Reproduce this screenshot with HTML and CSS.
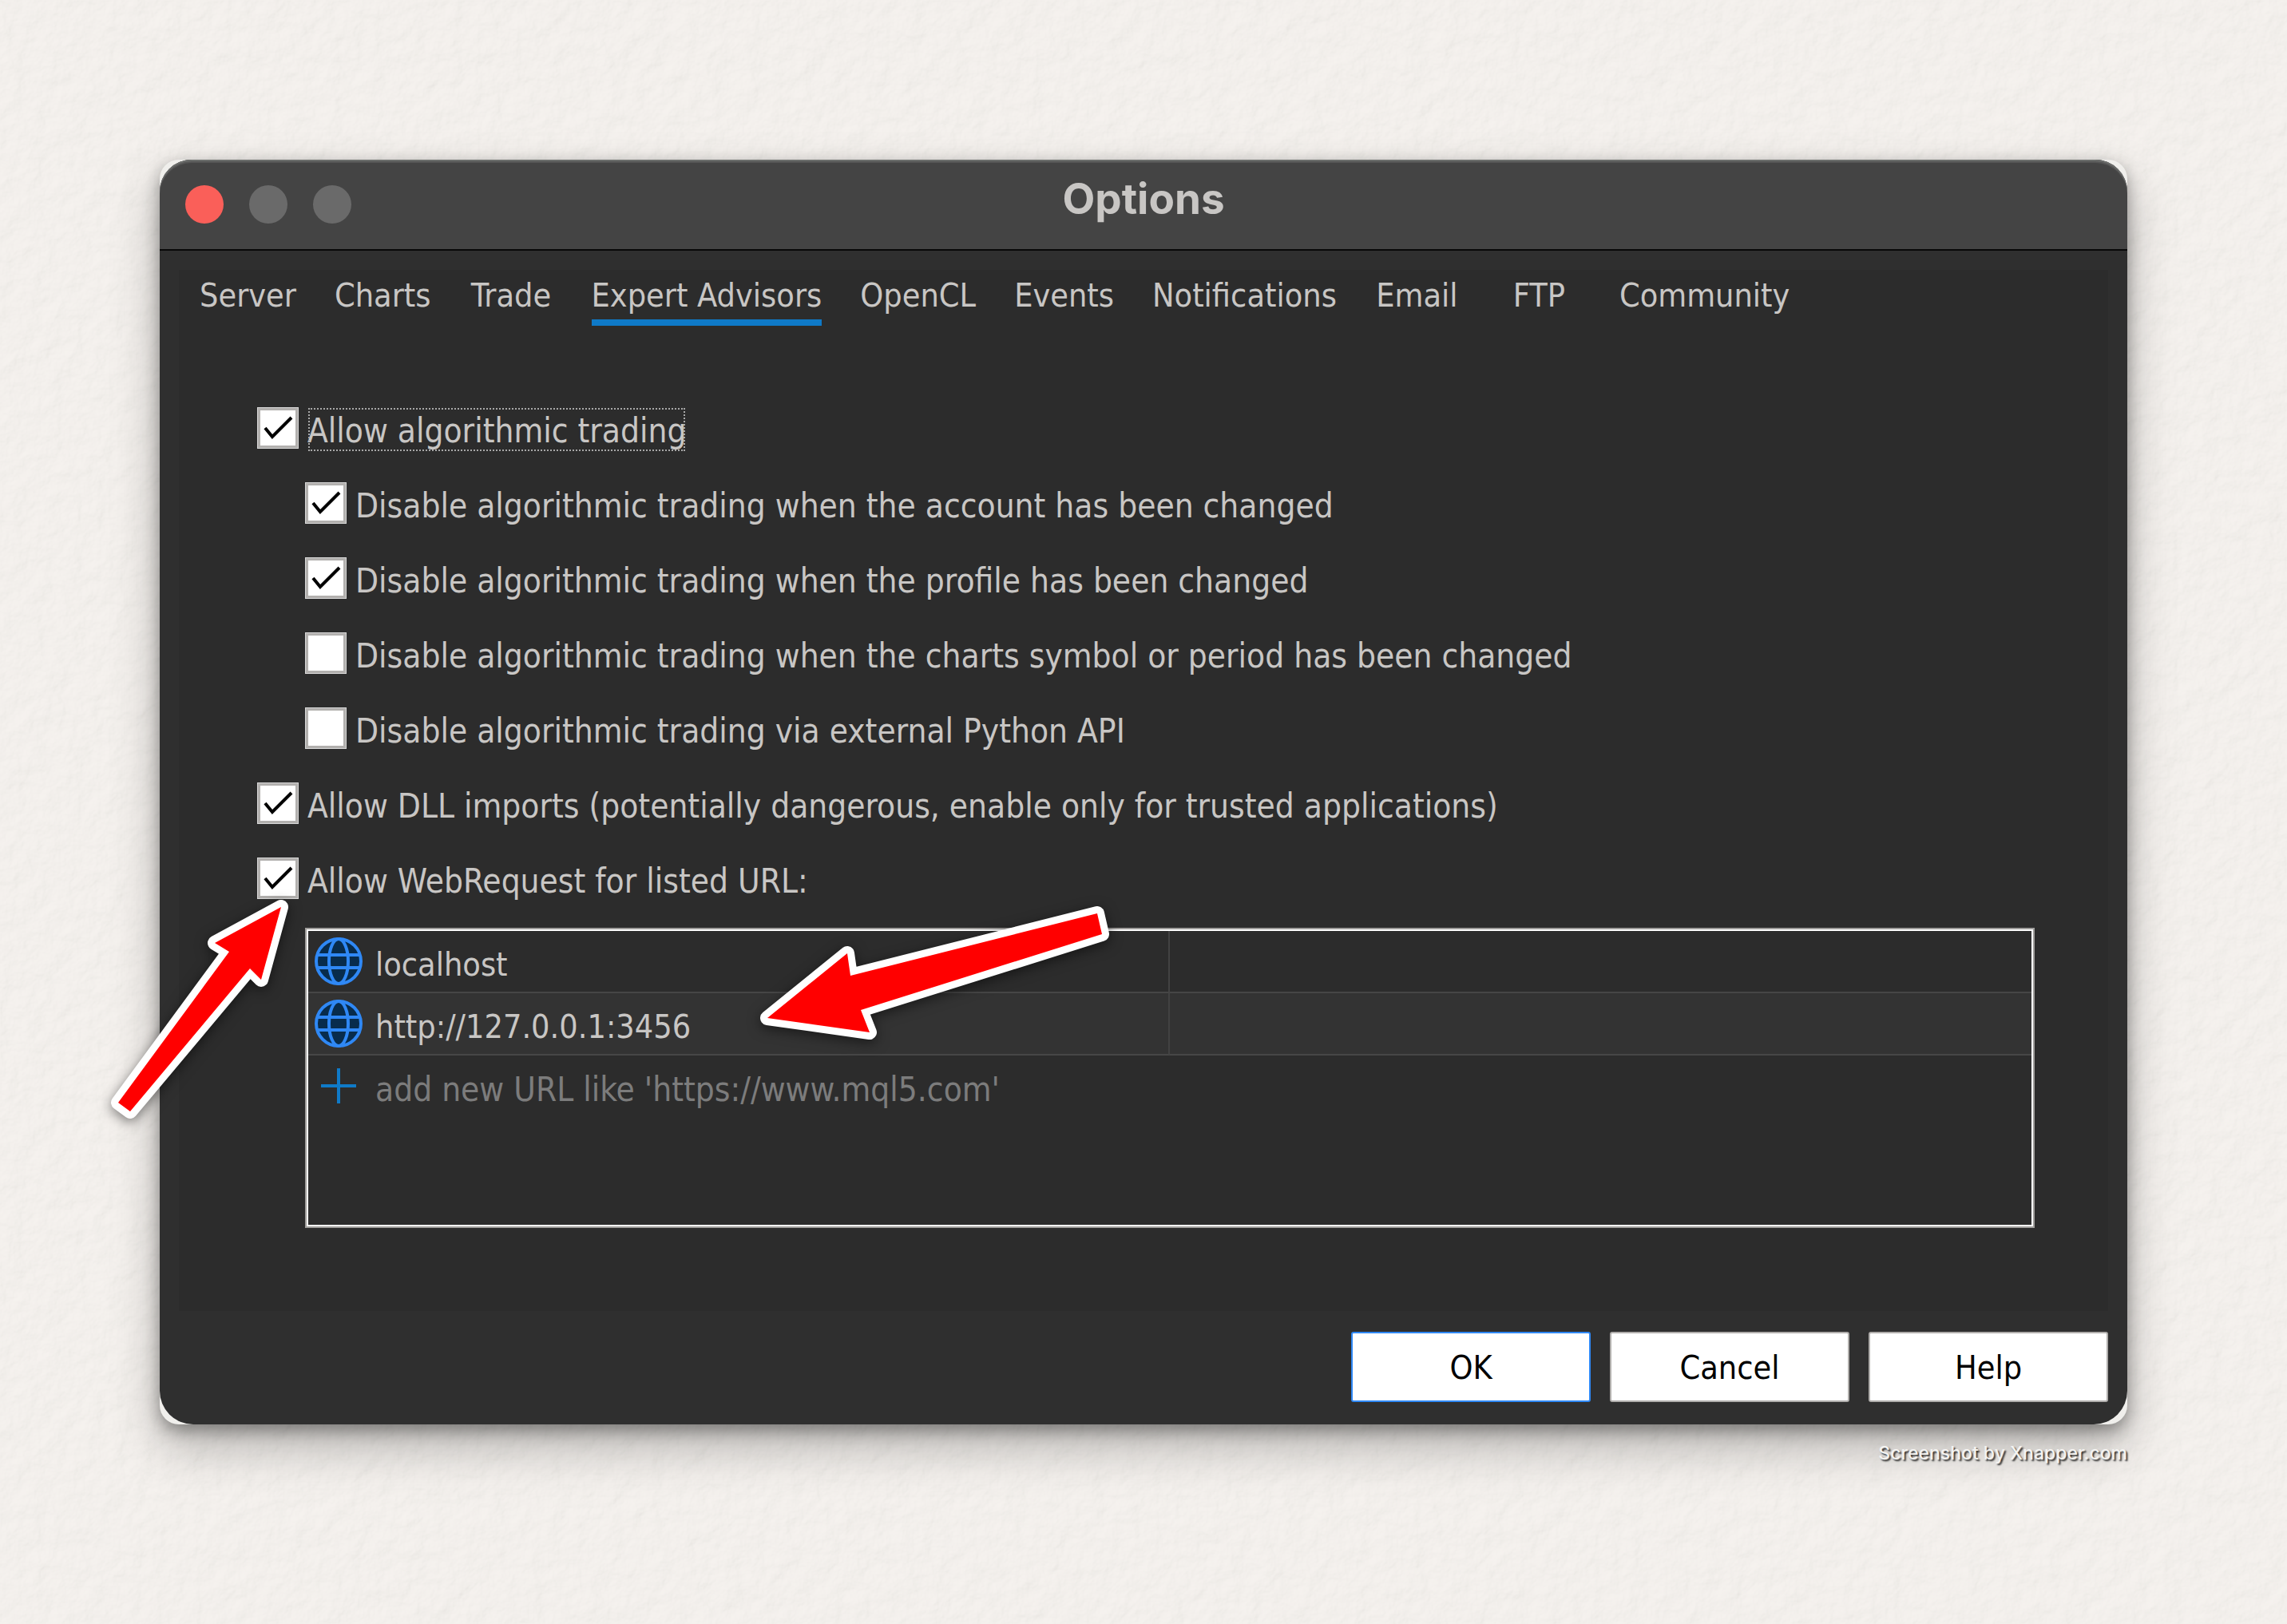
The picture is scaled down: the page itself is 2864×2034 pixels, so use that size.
FILE: index.html
```
<!DOCTYPE html>
<html lang="en">
<head>
  <meta charset="UTF-8">
  <title>Options</title>
  <link rel="stylesheet" href="styles.css">
</head>
<body>

  <!-- paper texture -->
  <svg class="paper" aria-hidden="true">
    <filter id="grain" x="0" y="0" width="100%" height="100%">
      <feTurbulence type="fractalNoise" baseFrequency="0.04" numOctaves="4" seed="7"/>
      <feDiffuseLighting lighting-color="#f5f2ee" surfaceScale="1.4" diffuseConstant="1">
        <feDistantLight azimuth="225" elevation="78"/>
      </feDiffuseLighting>
    </filter>
    <rect width="100%" height="100%" filter="url(#grain)"/>
  </svg>

  <div class="window-frame">
    <div class="window">

      <header class="title-bar">
        <div class="lights">
          <span class="light close"></span>
          <span class="light"></span>
          <span class="light"></span>
        </div>
        <h1>Options</h1>
      </header>

      <main class="panel">
        <nav class="tabs">
          <a href="#"><span>Server</span></a>
          <a href="#"><span>Charts</span></a>
          <a href="#"><span>Trade</span></a>
          <a href="#" class="active"><span>Expert Advisors</span></a>
          <a href="#"><span>OpenCL</span></a>
          <a href="#"><span>Events</span></a>
          <a href="#"><span>Notifications</span></a>
          <a href="#"><span>Email</span></a>
          <a href="#"><span>FTP</span></a>
          <a href="#"><span>Community</span></a>
        </nav>

        <div class="settings">
          <div class="check">
            <input type="checkbox" id="allowAlgo" checked>
            <label class="focused" for="allowAlgo">Allow algorithmic trading</label>
          </div>
          <div class="check sub">
            <input type="checkbox" id="accountChanged" checked>
            <label for="accountChanged">Disable algorithmic trading when the account has been changed</label>
          </div>
          <div class="check sub">
            <input type="checkbox" id="profileChanged" checked>
            <label for="profileChanged">Disable algorithmic trading when the profile has been changed</label>
          </div>
          <div class="check sub">
            <input type="checkbox" id="symbolChanged">
            <label for="symbolChanged">Disable algorithmic trading when the charts symbol or period has been changed</label>
          </div>
          <div class="check sub">
            <input type="checkbox" id="pythonApi">
            <label for="pythonApi">Disable algorithmic trading via external Python API</label>
          </div>
          <div class="check">
            <input type="checkbox" id="allowDll" checked>
            <label for="allowDll">Allow DLL imports (potentially dangerous, enable only for trusted applications)</label>
          </div>
          <div class="check">
            <input type="checkbox" id="allowWeb" checked>
            <label for="allowWeb">Allow WebRequest for listed URL:</label>
          </div>

          <div class="url-box">
            <table class="url-list">
              <tbody>
                <tr>
                  <td>
                    <div class="url">
                      <svg class="icon" viewBox="0 0 60 60"><use href="#globe"/></svg>
                      <span>localhost</span>
                    </div>
                  </td>
                  <td></td>
                </tr>
                <tr class="alt">
                  <td>
                    <div class="url">
                      <svg class="icon" viewBox="0 0 60 60"><use href="#globe"/></svg>
                      <span>http://127.0.0.1:3456</span>
                    </div>
                  </td>
                  <td></td>
                </tr>
              </tbody>
            </table>
            <div class="url">
              <svg class="icon" viewBox="0 0 60 60">
                <path d="M8 30H52M30 8V52" stroke="#0f7ac8" stroke-width="4"/>
              </svg>
              <input type="text" id="newUrl" aria-label="New URL" placeholder="add new URL like 'https://www.mql5.com'">
            </div>

            <svg class="arrow arrow-check" viewBox="0 0 260 300">
              <path d="M232 26L149 71L167 82L28 271L43 282L193 103L207 117Z"/>
            </svg>
            <svg class="arrow arrow-url" viewBox="0 0 480 200">
              <path d="M31 155L131 74L135 102L444 24L450 50L148 145L159 173Z"/>
            </svg>
          </div>
        </div>
      </main>

      <footer class="buttons">
        <button type="button" class="default">OK</button>
        <button type="button">Cancel</button>
        <button type="button">Help</button>
      </footer>

    </div>
  </div>

  <p class="credit">Screenshot by Xnapper.com</p>

  <svg class="symbols" aria-hidden="true">
    <symbol id="globe" viewBox="0 0 60 60">
      <circle cx="30" cy="30" r="28" fill="#082c4c"/>
      <g fill="none" stroke="#2f88f5" stroke-width="4">
        <circle cx="30" cy="30" r="28"/>
        <ellipse cx="30" cy="30" rx="12" ry="28"/>
        <path d="M3 22H57M3 38H57"/>
      </g>
    </symbol>
  </svg>

</body>
</html>
```
FILE: styles.css
```
* {
  box-sizing: border-box;
}

body {
  margin: 0;
  padding: 200px;
  background: #f0eeeb;
  color: #c8c6c4;
  font-family: "DejaVu Sans Condensed", "DejaVu Sans", Tahoma, sans-serif;
  font-size: 41px;
}

.paper {
  position: absolute;
  top: 0;
  left: 0;
  width: 100%;
  height: 100%;
  z-index: -1;
}

.symbols {
  display: none;
}

.window-frame {
  border-radius: 24px;
  background: #f0efec;
  box-shadow: 0 28px 60px rgba(0, 0, 0, 0.26), 0 8px 20px rgba(0, 0, 0, 0.34);
}

.window {
  border-radius: 42px;
  background: #2f2f2f;
}

.title-bar {
  position: relative;
  height: 114px;
  padding: 32px;
  border-radius: 40px 40px 0 0;
  border-bottom: 2px solid #080808;
  background: #444;
  box-shadow: inset 0 2px #6c6e6c, inset 0 4px #565656;
}

.lights {
  display: flex;
  gap: 32px;
}

.light {
  width: 48px;
  height: 48px;
  border-radius: 50%;
  background: #6a6a6a;
}

.light.close {
  background: #fa5f59;
}

.title-bar h1 {
  position: absolute;
  top: 0;
  left: 0;
  right: 0;
  margin: 0;
  font-family: Inter, sans-serif;
  font-size: 53px;
  font-weight: bold;
  line-height: 98px;
  text-align: center;
  pointer-events: none;
}

.panel {
  margin: 24px 24px 0;
  padding: 2px 0 104px;
  background: #2c2c2c;
}

.tabs {
  display: flex;
  padding-left: 2px;
}

.tabs a {
  min-width: 153px;
  padding: 0 24px;
  color: inherit;
  line-height: 60px;
  text-align: center;
  text-decoration: none;
}

.tabs span {
  display: inline-block;
  border-bottom: 8px solid transparent;
}

.tabs .active span {
  border-color: #0f7ac8;
}

.settings {
  display: flex;
  flex-direction: column;
  gap: 38px;
  padding: 102px 92px 0 98px;
}

.check {
  display: flex;
  align-items: flex-start;
  gap: 11px;
}

.check.sub {
  padding-left: 60px;
}

.check input {
  appearance: none;
  width: 52px;
  height: 52px;
  margin: 0;
  border: 4px solid #b2b0ae;
  outline: 1px solid #d8d8d8;
  outline-offset: -1px;
  background: #fff border-box;
}

.check input:checked {
  background-image: url("data:image/svg+xml,%3Csvg xmlns='http://www.w3.org/2000/svg' viewBox='0 0 52 52'%3E%3Cpath d='M10 26L19 37L43 13' fill='none' stroke='%23000' stroke-width='4'/%3E%3C/svg%3E");
}

.check label {
  padding-top: 4px;
  font-size: 42px;
  line-height: 52px;
}

.check .focused {
  outline: 2px dotted #a8a8a8;
  outline-offset: -3px;
}

.url-box {
  position: relative;
  height: 376px;
  margin: -6px 0 0 60px;
  border: 2px solid #a09e9c;
  box-shadow: inset 0 0 0 2px #fff;
  padding: 2px;
}

.url-list {
  width: 100%;
  border-collapse: separate;
  border-spacing: 0;
  table-layout: fixed;
}

.url-list td {
  padding: 0;
  border-bottom: 2px solid #464646;
}

.url-list td:first-child {
  width: 50%;
  border-right: 2px solid #424242;
}

.url-list .alt {
  background: #333;
}

.url {
  display: flex;
  align-items: center;
  gap: 16px;
  height: 76px;
  padding-left: 8px;
}

.icon {
  width: 60px;
  height: 60px;
}

.url span,
.url input {
  padding: 8px 0 0;
  line-height: 60px;
}

.url input {
  flex: 1;
  height: 68px;
  border: 0;
  background: none;
  color: inherit;
  font-family: inherit;
  font-size: 42px;
}

.url input::placeholder {
  color: #7c7c7c;
}

.arrow {
  position: absolute;
  overflow: visible;
  fill: #f00;
  stroke: #fff;
  stroke-width: 18px;
  stroke-linejoin: round;
  paint-order: stroke;
  filter: drop-shadow(0 4px 8px rgba(0, 0, 0, 0.5));
  pointer-events: none;
}

.arrow-check {
  top: -54px;
  left: -264px;
  width: 260px;
  height: 300px;
}

.arrow-url {
  top: -44px;
  left: 546px;
  width: 480px;
  height: 200px;
}

.buttons {
  display: flex;
  justify-content: flex-end;
  gap: 24px;
  padding: 26px 24px 28px;
}

.buttons button {
  width: 300px;
  height: 88px;
  padding: 2px 0 0;
  border: 2px solid #b0aeac;
  border-radius: 3px;
  background: #fff;
  color: #000;
  font-family: inherit;
  font-size: 41px;
}

.buttons .default {
  border-color: #2f88f5;
}

.credit {
  margin: 16px 0 0;
  color: #f4f3f1;
  font-family: Inter, sans-serif;
  font-size: 23px;
  font-weight: 500;
  line-height: 40px;
  text-align: right;
  text-shadow: 2px 2px 2px rgba(0, 0, 0, 0.8);
}
```
